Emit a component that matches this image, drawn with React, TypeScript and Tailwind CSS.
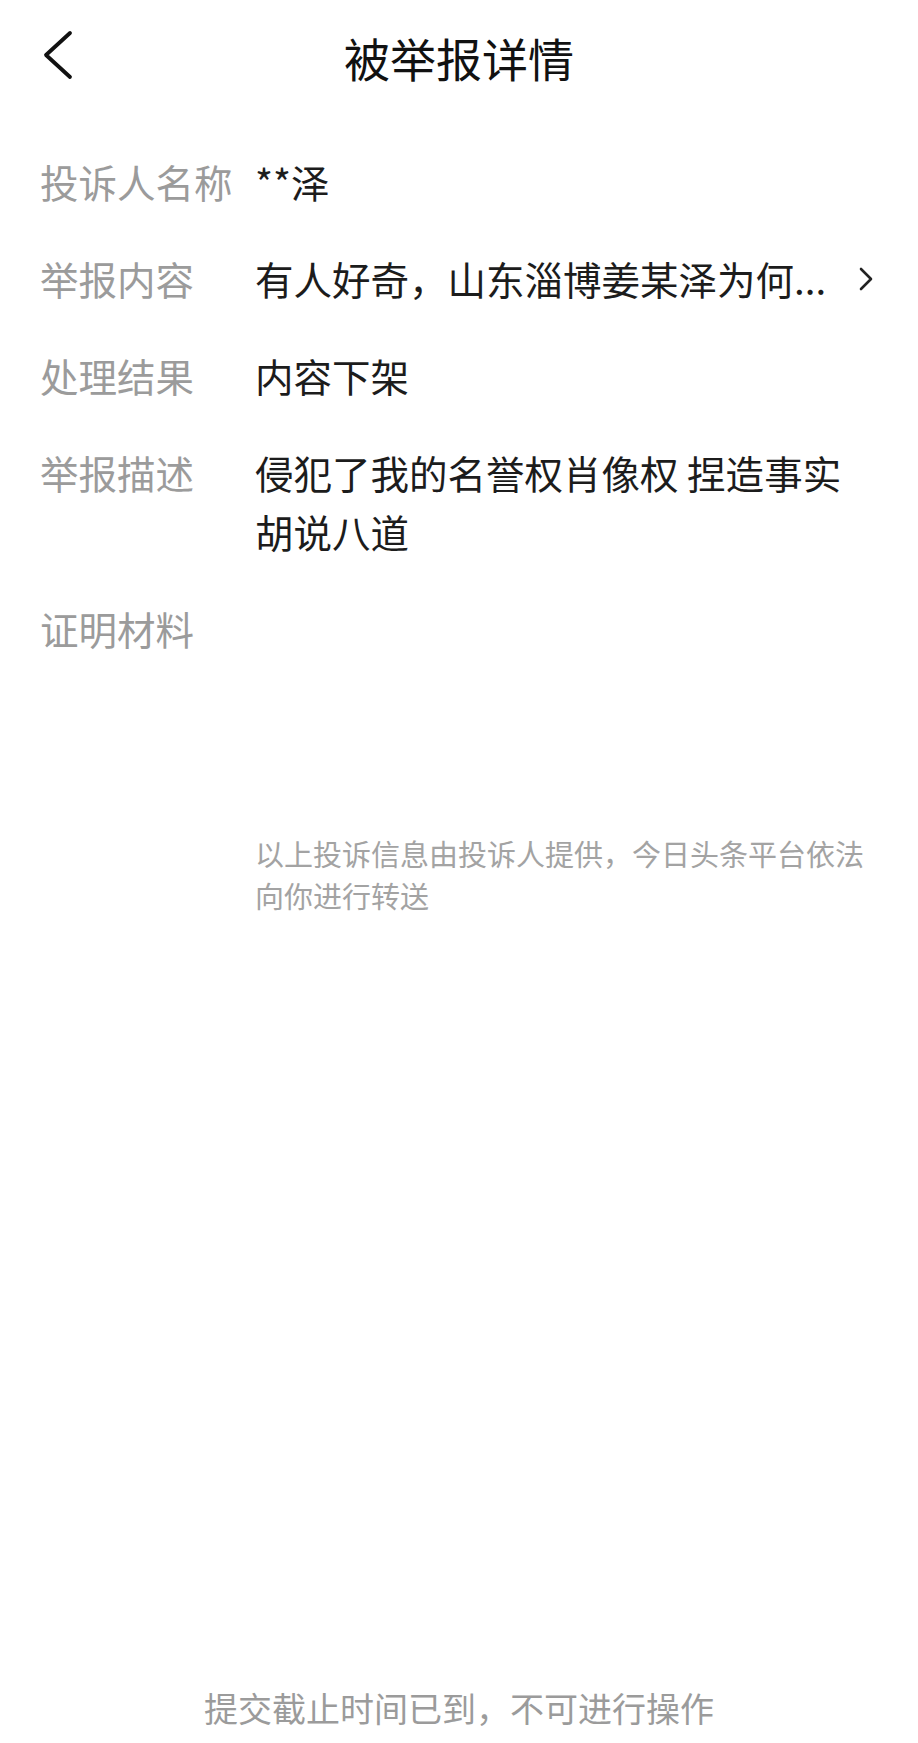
import React from 'react';

interface Row {
  label: string;
  value?: string;
  link?: boolean;
}

const rows: Row[] = [
  { label: '投诉人名称', value: '**泽' },
  { label: '举报内容', value: '有人好奇，山东淄博姜某泽为何...', link: true },
  { label: '处理结果', value: '内容下架' },
  { label: '举报描述', value: '侵犯了我的名誉权肖像权 捏造事实胡说八道' },
  { label: '证明材料' },
];

function BackIcon() {
  return (
    <svg width="40" height="60" viewBox="0 0 40 60" fill="none" className="block">
      <polyline
        points="36,8 12,30 36,52"
        stroke="#111"
        strokeWidth="3.8"
        strokeLinecap="round"
        strokeLinejoin="round"
      />
    </svg>
  );
}

function ChevronRight() {
  return (
    <svg width="14" height="24" viewBox="0 0 14 24" fill="none" className="block shrink-0">
      <polyline
        points="2,2 12,12 2,22"
        stroke="#222"
        strokeWidth="2.6"
        strokeLinecap="round"
        strokeLinejoin="round"
      />
    </svg>
  );
}

export default function App() {
  return (
    <div
      className="min-h-[1743px] w-full bg-white flex flex-col"
      style={{ fontFamily: '"Noto Sans CJK SC", "Noto Sans", sans-serif' }}
    >
      {/* header */}
      <div className="relative h-[114px] flex items-center justify-center">
        <button className="absolute left-[34px] top-[25px] p-0">
          <BackIcon />
        </button>
        <h1 className="text-[46px] leading-none text-[#111] font-normal">被举报详情</h1>
      </div>

      {/* detail rows */}
      <div className="flex flex-col gap-[38px] pt-[38px] pl-[40px] pr-[45px]">
        {rows.map((row) => (
          <div key={row.label} className="flex items-start text-[38.5px] leading-[59px]">
            <div className="w-[215px] shrink-0 text-[#9b9b9b]">{row.label}</div>
            {row.value && (
              <div className="flex-1 min-w-0 flex items-center gap-3">
                <div className={`flex-1 min-w-0 text-[#1c1c1c] ${row.link ? 'truncate' : ''}`}>
                  {row.value}
                </div>
                {row.link && <ChevronRight />}
              </div>
            )}
          </div>
        ))}
      </div>

      {/* evidence area (empty) */}
      <div className="h-[174px]" />

      <p className="pl-[255px] pr-[45px] text-[29px] leading-[42px] text-[#a3a3a3]">
        以上投诉信息由投诉人提供，今日头条平台依法向你进行转送
      </p>

      <div className="flex-1" />

      <div className="pb-[11px] text-center text-[34px] leading-[48px] text-[#9b9b9b]">
        提交截止时间已到，不可进行操作
      </div>
    </div>
  );
}
